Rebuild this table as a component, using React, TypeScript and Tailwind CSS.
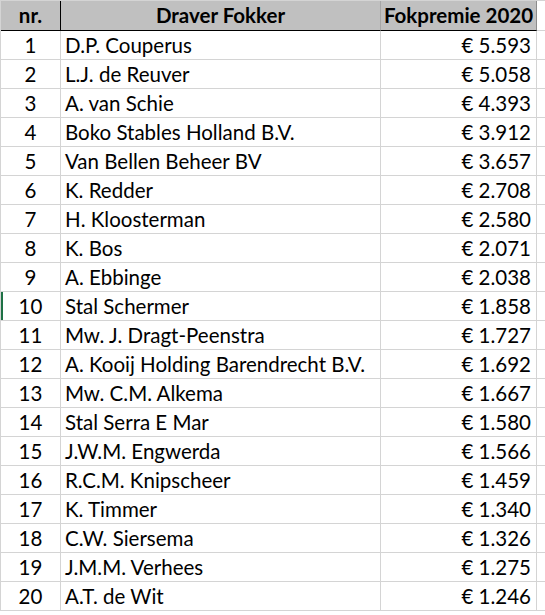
const rows: [number, string, string][] = [
  [1, 'D.P. Couperus', '€ 5.593'],
  [2, 'L.J. de Reuver', '€ 5.058'],
  [3, 'A. van Schie', '€ 4.393'],
  [4, 'Boko Stables Holland B.V.', '€ 3.912'],
  [5, 'Van Bellen Beheer BV', '€ 3.657'],
  [6, 'K. Redder', '€ 2.708'],
  [7, 'H. Kloosterman', '€ 2.580'],
  [8, 'K. Bos', '€ 2.071'],
  [9, 'A. Ebbinge', '€ 2.038'],
  [10, 'Stal Schermer', '€ 1.858'],
  [11, 'Mw. J. Dragt-Peenstra', '€ 1.727'],
  [12, 'A. Kooij Holding Barendrecht B.V.', '€ 1.692'],
  [13, 'Mw. C.M. Alkema', '€ 1.667'],
  [14, 'Stal Serra E Mar', '€ 1.580'],
  [15, 'J.W.M. Engwerda', '€ 1.566'],
  [16, 'R.C.M. Knipscheer', '€ 1.459'],
  [17, 'K. Timmer', '€ 1.340'],
  [18, 'C.W. Siersema', '€ 1.326'],
  [19, 'J.M.M. Verhees', '€ 1.275'],
  [20, 'A.T. de Wit', '€ 1.246'],
];

const App = () => {
  return (
    <div
      className="w-[545px] h-[615px] overflow-hidden bg-white text-black"
      style={{ fontFamily: 'Lato, "Open Sans", sans-serif' }}
    >
      <div className="grid grid-cols-[60px_320px_156px_1fr] border-t border-l border-[#d4d4d4]">
        {/* header */}
        <div className="h-[30px] flex items-center justify-center bg-[#c0c0c0] border-r border-r-black border-b border-b-black text-[20.5px] font-bold">
          nr.
        </div>
        <div className="h-[30px] flex items-center justify-center bg-[#c0c0c0] border-r border-r-[#a6a6a6] border-b border-b-black text-[20.5px] font-bold">
          Draver Fokker
        </div>
        <div className="h-[30px] flex items-center justify-center bg-[#c0c0c0] border-r border-r-[#8c8c8c] border-b border-b-black text-[20.5px] font-bold">
          Fokpremie 2020
        </div>
        <div className="h-[30px] border-b border-[#d4d4d4]" />

        {rows.map(([nr, name, amount]) => (
          <div key={nr} className="contents">
            <div
              className={
                nr === 10
                  ? 'h-[29px] flex items-center justify-center border-r border-b border-[#d4d4d4] text-[20.5px] shadow-[inset_2px_0_0_#1e7145]'
                  : 'h-[29px] flex items-center justify-center border-r border-b border-[#d4d4d4] text-[20.5px]'
              }
            >
              {nr}
            </div>
            <div className="h-[29px] flex items-center pl-[4px] border-r border-b border-[#d4d4d4] text-[20.5px] whitespace-nowrap">
              {name}
            </div>
            <div className="h-[29px] flex items-center justify-end pr-[5px] border-r border-b border-[#d4d4d4] text-[20.5px] whitespace-nowrap">
              {amount}
            </div>
            <div className="h-[29px] border-b border-[#d4d4d4]" />
          </div>
        ))}
      </div>
    </div>
  );
};

export default App;
